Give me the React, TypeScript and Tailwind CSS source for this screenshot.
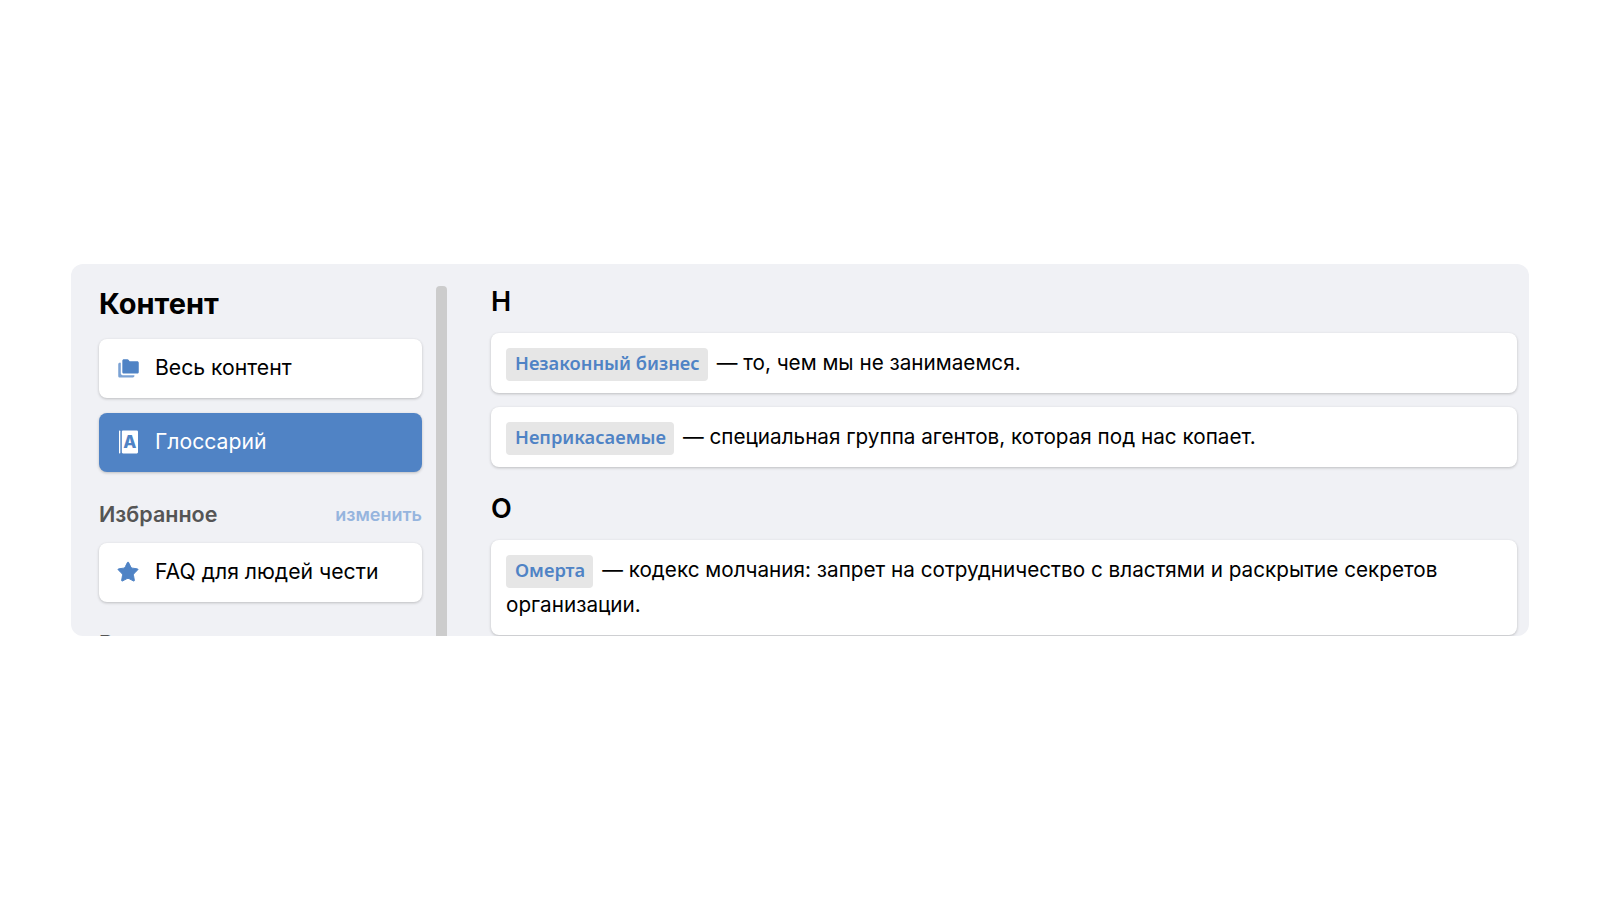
import type { ReactNode } from "react"
import { Star } from "lucide-react"

function FolderIcon() {
  return (
    <svg viewBox="0 0 22 20" className="w-[21px] h-[19px] text-[#4f83c5]" fill="currentColor">
      <path d="M4.5 1.8C4.5.8 5.2.2 6.2.2h3.6c.6 0 1 .3 1.4.8l1 1.3h7.9c1 0 1.7.7 1.7 1.7v9.6c0 1-.7 1.7-1.7 1.7H6.2c-1 0-1.7-.7-1.7-1.7V1.8z" />
      <path d="M.2 5.5c0-1 .6-1.6 1.5-1.6h1.2v11.2c0 1.1.8 1.9 1.9 1.9h12.4v1c0 .9-.7 1.5-1.6 1.5H1.9C.9 19.5.2 18.8.2 17.8V5.5z" opacity="0.75" />
    </svg>
  )
}

function BookIcon() {
  return (
    <svg viewBox="0 0 20 24" className="mb-[2px] w-[19px] h-[24px]">
      <rect x="0" y="0" width="1.4" height="24" rx="0.6" fill="#fff" />
      <rect x="3" y="0" width="17" height="24" rx="1.2" fill="#fff" />
      <text
        x="11.5"
        y="18.5"
        textAnchor="middle"
        fontSize="18"
        fontWeight="800"
        fontFamily="Inter, sans-serif"
        fill="#4f83c5"
      >
        A
      </text>
    </svg>
  )
}

function NavItem({ icon, label, active }: { icon: ReactNode; label: string; active?: boolean }) {
  return (
    <div
      className={
        active
          ? "h-[59px] flex items-center rounded-lg bg-[#5083c5] text-white shadow-[0_1px_3px_rgba(0,0,0,0.22)]"
          : "h-[59px] flex items-center rounded-lg bg-white text-black shadow-[0_1px_3px_rgba(0,0,0,0.22)]"
      }
    >
      <div className="w-[56px] flex justify-center pl-[2px]">{icon}</div>
      <span className="pb-[2px] text-[21.2px]">{label}</span>
    </div>
  )
}

function Term({ name, children }: { name: string; children: ReactNode }) {
  return (
    <div className="rounded-lg bg-white px-[15px] pt-[11.5px] pb-[13.5px] text-[20.7px] leading-[35px] text-black shadow-[0_1px_3px_rgba(0,0,0,0.22)]">
      <span className="mr-[9px] mt-[3px] mb-[-1px] inline-block h-[33px] rounded bg-[#e6e6e6] pl-[9px] pr-[8px] align-top font-['Noto_Sans',sans-serif] text-[18.3px] leading-[30px] font-semibold text-[#4f83c5]">
        {name}
      </span>
      {children}
    </div>
  )
}

export default function App() {
  return (
    <div className="min-h-[900px] bg-white pt-[264px] px-[71px] font-['Inter',sans-serif]">
      <div className="flex h-[372px] overflow-hidden rounded-xl bg-[#f0f1f5]">
        <aside className="ml-[28px] w-[323px] shrink-0 pt-[20px]">
          <h2 className="text-[29px] leading-[40px] font-bold text-black">Контент</h2>
          <div className="mt-[15px] flex flex-col gap-[15px]">
            <NavItem icon={<FolderIcon />} label="Весь контент" />
            <NavItem icon={<BookIcon />} label="Глоссарий" active />
          </div>
          <div className="mt-[26px] flex items-center justify-between">
            <span className="text-[21.5px] leading-[32px] font-semibold text-[#555555]">Избранное</span>
            <span className="text-[18px] font-semibold text-[#96b5de]">изменить</span>
          </div>
          <div className="mt-[13px]">
            <NavItem
              icon={<Star className="mb-[2px] w-[24px] h-[24px] text-[#4f83c5]" fill="currentColor" strokeWidth={1} />}
              label="FAQ для людей чести"
            />
          </div>
          <div className="mt-[25px] text-[22px] leading-[32px] font-semibold text-[#555555]">Разделы</div>
        </aside>

        <div className="ml-[14px] mt-[22px] w-[11px] shrink-0 rounded-t-sm bg-[#cccccc]" />

        <main className="ml-[44px] min-w-0 flex-1 pr-[12px] pt-[22px]">
          <h3 className="text-[27px] leading-[32px] font-semibold text-black">Н</h3>
          <div className="mt-[15px] flex flex-col gap-[14px]">
            <Term name="Незаконный бизнес">— то, чем мы не занимаемся.</Term>
            <Term name="Неприкасаемые">— специальная группа агентов, которая под нас копает.</Term>
          </div>
          <h3 className="mt-[26px] text-[27px] leading-[32px] font-semibold text-black">О</h3>
          <div className="mt-[15px]">
            <Term name="Омерта">
              — кодекс молчания: запрет на сотрудничество с властями и раскрытие секретов организации.
            </Term>
          </div>
        </main>
      </div>
    </div>
  )
}
